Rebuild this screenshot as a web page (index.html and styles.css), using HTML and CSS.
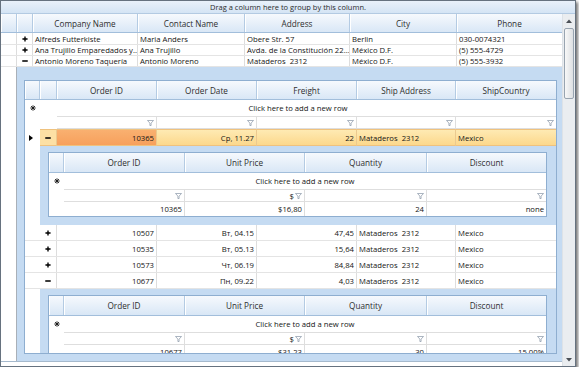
FILE: index.html
```html
<!DOCTYPE html>
<html lang="en">

<head>
    <meta charset="utf-8">
    <meta name="viewport" content="width=device-width, initial-scale=1.0">
    <title>Customers - Hierarchy Grid</title>
    <link rel="stylesheet" href="styles.css">
</head>
<body>

    <!-- Icon sprite -->
    <svg class="sprite" xmlns="http://www.w3.org/2000/svg">
        <symbol id="i-plus" viewBox="0 0 7 7"><path d="M0.5 3.5H6.5M3.5 0.5V6.5" stroke="#000" stroke-width="1.6" fill="none"/></symbol>
        <symbol id="i-minus" viewBox="0 0 7 7"><path d="M0.3 3.5H6.7" stroke="#000" stroke-width="1.8" fill="none"/></symbol>
        <symbol id="i-star" viewBox="0 0 7 7"><path d="M3.5 0.3V6.7M0.3 3.5H6.7M1.2 1.2L5.8 5.8M5.8 1.2L1.2 5.8" stroke="#111" stroke-width="1" fill="none"/></symbol>
        <symbol id="i-filter" viewBox="0 0 7 6"><path d="M0.5 0.5H6.5L4.1 3.1V5.5H2.9V3.1Z" stroke="#8695a6" stroke-width="0.7" fill="none"/></symbol>
        <symbol id="i-current" viewBox="0 0 4 6"><path d="M0 0L4 3L0 6Z" fill="#000"/></symbol>
        <symbol id="i-up" viewBox="0 0 6 4"><path d="M0 4L3 0.5L6 4Z" fill="#4a4f55"/></symbol>
        <symbol id="i-down" viewBox="0 0 6 4"><path d="M0 0L3 3.5L6 0Z" fill="#4a4f55"/></symbol>
    </svg>

    <div class="frame">
        <div class="group-panel">Drag a column here to group by this column.</div>

        <div class="frame-body">
            <div class="main">

                <!-- Customers -->
                <div class="row customers head">
                    <div class="hcell"></div>
                    <div class="hcell"></div>
                    <div class="hcell">Company Name</div>
                    <div class="hcell">Contact Name</div>
                    <div class="hcell">Address</div>
                    <div class="hcell">City</div>
                    <div class="hcell">Phone</div>
                </div>

                <div class="row customers data r12">
                    <div class="cell ind"></div>
                    <div class="cell exp"><svg class="sign"><use href="#i-plus"/></svg></div>
                    <div class="cell">Alfreds Futterkiste</div>
                    <div class="cell">Maria Anders</div>
                    <div class="cell">Obere Str. 57</div>
                    <div class="cell">Berlin</div>
                    <div class="cell">030-0074321</div>
                </div>
                <div class="row customers data">
                    <div class="cell ind"></div>
                    <div class="cell exp"><svg class="sign"><use href="#i-plus"/></svg></div>
                    <div class="cell">Ana Trujillo Emparedados y...</div>
                    <div class="cell">Ana Trujillo</div>
                    <div class="cell">Avda. de la Constitución 22...</div>
                    <div class="cell">México D.F.</div>
                    <div class="cell">(5) 555-4729</div>
                </div>
                <div class="row customers data">
                    <div class="cell ind"></div>
                    <div class="cell exp"><svg class="sign"><use href="#i-minus"/></svg></div>
                    <div class="cell">Antonio Moreno Taquería</div>
                    <div class="cell">Antonio Moreno</div>
                    <div class="cell">Mataderos  2312</div>
                    <div class="cell">México D.F.</div>
                    <div class="cell">(5) 555-3932</div>
                </div>

                <div class="row customers detail-row">
                    <div class="cell ind line"></div>
                    <div class="detail outer-detail">

                        <!-- Orders -->
                        <div class="orders">
                            <div class="row orders-cols head">
                                <div class="hcell"></div>
                                <div class="hcell"></div>
                                <div class="hcell">Order ID</div>
                                <div class="hcell">Order Date</div>
                                <div class="hcell">Freight</div>
                                <div class="hcell">Ship Address</div>
                                <div class="hcell">ShipCountry</div>
                            </div>

                            <div class="row orders-cols new-row">
                                <div class="mark"><svg class="star"><use href="#i-star"/></svg></div>
                                <div class="new-text">Click here to add a new row</div>
                            </div>

                            <div class="row orders-cols filter-row">
                                <div class="blank"></div>
                                <div class="blank"></div>
                                <div class="fcell"><svg class="funnel"><use href="#i-filter"/></svg></div>
                                <div class="fcell"><svg class="funnel"><use href="#i-filter"/></svg></div>
                                <div class="fcell"><svg class="funnel"><use href="#i-filter"/></svg></div>
                                <div class="fcell"><svg class="funnel"><use href="#i-filter"/></svg></div>
                                <div class="fcell"><svg class="funnel"><use href="#i-filter"/></svg></div>
                            </div>

                            <div class="row orders-cols selected">
                                <div class="mark"><svg class="current"><use href="#i-current"/></svg></div>
                                <div class="cell exp"><svg class="sign"><use href="#i-minus"/></svg></div>
                                <div class="cell num active">10365</div>
                                <div class="cell num">Ср, 11.27</div>
                                <div class="cell num">22</div>
                                <div class="cell">Mataderos  2312</div>
                                <div class="cell">Mexico</div>
                            </div>

                            <div class="row orders-cols detail-row d1">
                                <div class="mark"></div>
                                <div class="detail inner-detail">
                                    <div class="details">
                                        <div class="row details-cols head">
                                            <div class="hcell"></div>
                                            <div class="hcell">Order ID</div>
                                            <div class="hcell">Unit Price</div>
                                            <div class="hcell">Quantity</div>
                                            <div class="hcell">Discount</div>
                                        </div>
                                        <div class="row details-cols new-row">
                                            <div class="mark"><svg class="star"><use href="#i-star"/></svg></div>
                                            <div class="new-text">Click here to add a new row</div>
                                        </div>
                                        <div class="row details-cols filter-row">
                                            <div class="blank"></div>
                                            <div class="fcell"><svg class="funnel"><use href="#i-filter"/></svg></div>
                                            <div class="fcell">$<svg class="funnel"><use href="#i-filter"/></svg></div>
                                            <div class="fcell"><svg class="funnel"><use href="#i-filter"/></svg></div>
                                            <div class="fcell"><svg class="funnel"><use href="#i-filter"/></svg></div>
                                        </div>
                                        <div class="row details-cols data">
                                            <div class="blank"></div>
                                            <div class="cell num">10365</div>
                                            <div class="cell num">$16,80</div>
                                            <div class="cell num">24</div>
                                            <div class="cell num">none</div>
                                        </div>
                                    </div>
                                </div>
                            </div>

                            <div class="row orders-cols data r16">
                                <div class="mark"></div>
                                <div class="cell exp"><svg class="sign"><use href="#i-plus"/></svg></div>
                                <div class="cell num">10507</div>
                                <div class="cell num">Вт, 04.15</div>
                                <div class="cell num">47,45</div>
                                <div class="cell">Mataderos  2312</div>
                                <div class="cell">Mexico</div>
                            </div>
                            <div class="row orders-cols data r16">
                                <div class="mark"></div>
                                <div class="cell exp"><svg class="sign"><use href="#i-plus"/></svg></div>
                                <div class="cell num">10535</div>
                                <div class="cell num">Вт, 05.13</div>
                                <div class="cell num">15,64</div>
                                <div class="cell">Mataderos  2312</div>
                                <div class="cell">Mexico</div>
                            </div>
                            <div class="row orders-cols data r16">
                                <div class="mark"></div>
                                <div class="cell exp"><svg class="sign"><use href="#i-plus"/></svg></div>
                                <div class="cell num">10573</div>
                                <div class="cell num">Чт, 06.19</div>
                                <div class="cell num">84,84</div>
                                <div class="cell">Mataderos  2312</div>
                                <div class="cell">Mexico</div>
                            </div>
                            <div class="row orders-cols data r16">
                                <div class="mark"></div>
                                <div class="cell exp"><svg class="sign"><use href="#i-minus"/></svg></div>
                                <div class="cell num">10677</div>
                                <div class="cell num">Пн, 09.22</div>
                                <div class="cell num">4,03</div>
                                <div class="cell">Mataderos  2312</div>
                                <div class="cell">Mexico</div>
                            </div>

                            <div class="row orders-cols detail-row d2">
                                <div class="mark"></div>
                                <div class="detail inner-detail">
                                    <div class="details">
                                        <div class="row details-cols head">
                                            <div class="hcell"></div>
                                            <div class="hcell">Order ID</div>
                                            <div class="hcell">Unit Price</div>
                                            <div class="hcell">Quantity</div>
                                            <div class="hcell">Discount</div>
                                        </div>
                                        <div class="row details-cols new-row">
                                            <div class="mark"><svg class="star"><use href="#i-star"/></svg></div>
                                            <div class="new-text">Click here to add a new row</div>
                                        </div>
                                        <div class="row details-cols filter-row">
                                            <div class="blank"></div>
                                            <div class="fcell"><svg class="funnel"><use href="#i-filter"/></svg></div>
                                            <div class="fcell">$<svg class="funnel"><use href="#i-filter"/></svg></div>
                                            <div class="fcell"><svg class="funnel"><use href="#i-filter"/></svg></div>
                                            <div class="fcell"><svg class="funnel"><use href="#i-filter"/></svg></div>
                                        </div>
                                        <div class="row details-cols data">
                                            <div class="blank"></div>
                                            <div class="cell num">10677</div>
                                            <div class="cell num">$31,23</div>
                                            <div class="cell num">30</div>
                                            <div class="cell num">15,00%</div>
                                        </div>
                                    </div>
                                </div>
                            </div>
                        </div>

                    </div>
                </div>

                <div class="footer"></div>
            </div>

            <!-- Vertical scrollbar -->
            <div class="scrollbar">
                <div class="sb-btn"><svg class="sb-arrow"><use href="#i-up"/></svg></div>
                <div class="sb-thumb"></div>
                <div class="sb-track"></div>
                <div class="sb-btn down"><svg class="sb-arrow"><use href="#i-down"/></svg></div>
            </div>
        </div>
    </div>

</body>

</html>
```

FILE: styles.css
```css
/* General */
body {
    margin: 0;
    font-family: "Open Sans", "DejaVu Sans", sans-serif;
    font-size: 7.7px;
    color: #151515;
    background: #ffffff;
}

.sprite {
    display: none;
}

/* Outer frame */
.frame {
    width: 576px;
    height: 367px;
    box-sizing: border-box;
    border: 1px solid #66727f;
    box-shadow: 2px 2px 3px rgba(0, 0, 0, 0.55);
    display: flex;
    flex-direction: column;
    overflow: hidden;
}

.group-panel {
    height: 13px;
    flex: none;
    box-sizing: border-box;
    border-bottom: 1px solid #b3cae2;
    background: linear-gradient(#e9f1fa, #d4e4f4);
    color: #2c2c2c;
    font-size: 7.5px;
    display: flex;
    align-items: center;
    justify-content: center;
}

.frame-body {
    flex: 1;
    display: flex;
    min-height: 0;
}

.main {
    width: 561px;
    flex: none;
    display: flex;
    flex-direction: column;
}

/* Rows & column sets */
.row {
    display: grid;
    box-sizing: border-box;
}

.customers {
    grid-template-columns: 16px 16px 105px 107px 105px 107px 105px;
}

.orders-cols {
    grid-template-columns: 15px 17px 100px 100px 100px 99px 100px;
}

.details-cols {
    grid-template-columns: 15px 121px 120px 122px 119px;
}

/* Headers */
.head {
    height: 19px;
    background: linear-gradient(#f6f9fd, #d9e7f6);
    border-bottom: 1px solid #a2bedb;
}

.details .head {
    height: 20px;
}

.hcell {
    display: flex;
    align-items: center;
    justify-content: center;
    box-sizing: border-box;
    border-right: 1px solid #b4cbe3;
    box-shadow: inset 1px 0 #ffffff;
    font-size: 8.2px;
    color: #2e2e2e;
}

.hcell:last-child {
    border-right: none;
}

/* Cells */
.cell {
    display: flex;
    align-items: center;
    box-sizing: border-box;
    padding: 0 2px;
    border-right: 1px solid #dddddd;
    white-space: pre;
    overflow: hidden;
}

.cell:last-child {
    border-right: none;
}

.num {
    justify-content: flex-end;
}

.data {
    height: 11px;
    border-bottom: 1px solid #e4e4e4;
}

.r12 {
    height: 12px;
}

.r16 {
    height: 16px;
}

.details .data {
    height: 14px;
    border-bottom: none;
}

.ind {
    padding: 0;
}

.ind.line {
    border-right: 1px solid #a9b0b8;
    background: #ffffff;
}

.exp {
    justify-content: center;
    padding: 0;
}

.sign {
    width: 6px;
    height: 6px;
}

.mark,
.blank {
    display: flex;
    align-items: center;
    justify-content: center;
    background: #ffffff;
}

.star {
    width: 6px;
    height: 6px;
}

.current {
    width: 4px;
    height: 6px;
    margin-right: 3px;
}

/* Detail areas */
.detail {
    grid-column: 2 / -1;
    background: #c5dbf2;
    box-sizing: border-box;
}

.outer-detail {
    height: 294px;
    padding: 13px 5px 7px 7px;
}

.inner-detail {
    padding: 6px 9px 8px 8px;
}

.d1 {
    height: 79px;
}

.d2 {
    height: 80px;
}

/* Nested grids */
.orders {
    height: 274px;
    box-sizing: border-box;
    border: 1px solid #8eaed0;
    background: #ffffff;
    overflow: hidden;
}

.details {
    box-sizing: border-box;
    border: 1px solid #8eaed0;
    background: #ffffff;
    overflow: hidden;
}

.new-row {
    height: 16px;
}

.new-text {
    grid-column: 2 / -1;
    display: flex;
    align-items: center;
    justify-content: center;
}

.filter-row {
    height: 13px;
}

.fcell {
    display: flex;
    align-items: center;
    justify-content: flex-end;
    gap: 1px;
    box-sizing: border-box;
    padding-right: 2px;
    border-top: 1px solid #dedede;
    border-bottom: 1px solid #dedede;
    border-right: 1px solid #dedede;
}

.fcell:last-child {
    border-right: none;
}

.funnel {
    width: 7px;
    height: 6px;
}

/* Selected order */
.selected {
    height: 17px;
}

.selected .cell {
    border-top: 1px solid #efc27e;
    border-bottom: 1px solid #efc27e;
    border-right-color: #ebc98f;
    background: linear-gradient(#feeab3, #fcd88c);
}

.selected .exp {
    background: #fde0a4;
}

.selected .active {
    background: linear-gradient(#f9b070, #f7a05c);
}

/* Bottom edge */
.footer {
    flex: 1;
    border-top: 1px solid #a5b9cd;
    background: #ffffff;
}

/* Scrollbar */
.scrollbar {
    width: 13px;
    flex: none;
    box-sizing: border-box;
    border-left: 1px solid #dde2e7;
    background: #eaedf0;
    display: flex;
    flex-direction: column;
}

.sb-btn {
    height: 14px;
    display: flex;
    align-items: center;
    justify-content: center;
}

.sb-btn.down {
    height: 13px;
}

.sb-arrow {
    width: 6px;
    height: 4px;
}

.sb-thumb {
    height: 71px;
    margin: 0 1px;
    box-sizing: border-box;
    border: 1px solid #98a4b0;
    border-radius: 2px;
    background: linear-gradient(90deg, #f8f8f8, #dcdfe2);
}

.sb-track {
    flex: 1;
}
```
